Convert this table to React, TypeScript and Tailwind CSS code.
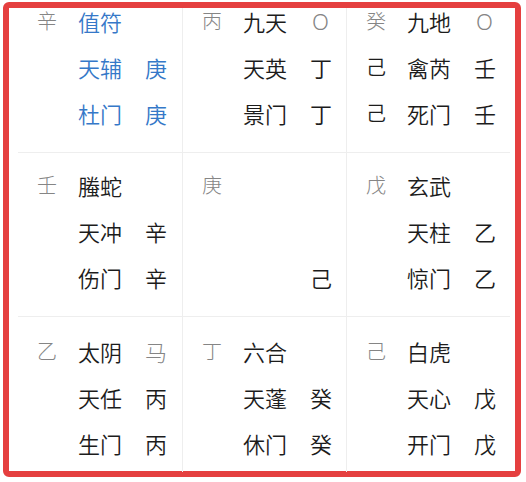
type Tone = "gray" | "blue" | "dark";
type Line = [string, string, string];

interface Cell {
  lines: Line[];
  stemTone?: Tone[];
  rightTone?: Tone[];
  blue?: boolean;
}

const cells: Cell[] = [
  {
    lines: [
      ["辛", "值符", ""],
      ["", "天辅", "庚"],
      ["", "杜门", "庚"],
    ],
    blue: true,
  },
  {
    lines: [
      ["丙", "九天", "O"],
      ["", "天英", "丁"],
      ["", "景门", "丁"],
    ],
    rightTone: ["gray", "dark", "dark"],
  },
  {
    lines: [
      ["癸", "九地", "O"],
      ["己", "禽芮", "壬"],
      ["己", "死门", "壬"],
    ],
    stemTone: ["gray", "dark", "dark"],
    rightTone: ["gray", "dark", "dark"],
  },
  {
    lines: [
      ["壬", "螣蛇", ""],
      ["", "天冲", "辛"],
      ["", "伤门", "辛"],
    ],
  },
  {
    lines: [
      ["庚", "", ""],
      ["", "", ""],
      ["", "", "己"],
    ],
  },
  {
    lines: [
      ["戊", "玄武", ""],
      ["", "天柱", "乙"],
      ["", "惊门", "乙"],
    ],
  },
  {
    lines: [
      ["乙", "太阴", "马"],
      ["", "天任", "丙"],
      ["", "生门", "丙"],
    ],
    rightTone: ["gray", "dark", "dark"],
  },
  {
    lines: [
      ["丁", "六合", ""],
      ["", "天蓬", "癸"],
      ["", "休门", "癸"],
    ],
  },
  {
    lines: [
      ["己", "白虎", ""],
      ["", "天心", "戊"],
      ["", "开门", "戊"],
    ],
  },
];

const toneClass: Record<Tone, string> = {
  gray: "text-[#858585] font-light",
  blue: "text-[#3578c8] font-[350]",
  dark: "text-[#1c1c1c] font-[350]",
};

const rowPad = ["pt-0", "pt-[19px]", "pt-[21px]"];

function PanCell({ cell, index }: { cell: Cell; index: number }) {
  const row = Math.floor(index / 3);
  const col = index % 3;
  const main: Tone = cell.blue ? "blue" : "dark";
  return (
    <div
      className={[
        "flex flex-col gap-[20px] pl-[19px]",
        rowPad[row],
        col > 0 ? "border-l border-[#eeeeee]" : "",
        row > 0 ? "border-t border-[#eeeeee]" : "",
      ].join(" ")}
    >
      {cell.lines.map((ln, i) => {
        const stemTone = cell.stemTone?.[i] ?? "gray";
        const rightTone = cell.rightTone?.[i] ?? main;
        return (
          <div key={i} className="flex h-[26px] items-center">
            <span className={["w-[41px] text-[20px]", toneClass[stemTone]].join(" ")}>
              {ln[0]}
            </span>
            <span className={["w-[67px] text-[22px]", toneClass[main]].join(" ")}>
              {ln[1]}
            </span>
            <span
              className={[
                "text-[22px]",
                toneClass[rightTone],
                ln[2] === "O" ? "pl-[2px] font-['Noto_Sans',sans-serif] text-[20px]" : "",
              ].join(" ")}
            >
              {ln[2]}
            </span>
          </div>
        );
      })}
    </div>
  );
}

export default function App() {
  return (
    <div className="h-[482px] w-[526px] bg-white pl-[3px] pt-[2px] font-['Noto_Sans_CJK_SC','Noto_Sans',sans-serif]">
      <div className="h-[475px] w-[518px] rounded-md border-[6px] border-[#e53f3f] pl-[9px] pr-[5px]">
        <div className="grid h-full grid-cols-[164px_164px_164px] grid-rows-[144px_164px_156px]">
          {cells.map((c, i) => (
            <PanCell key={i} cell={c} index={i} />
          ))}
        </div>
      </div>
    </div>
  );
}
